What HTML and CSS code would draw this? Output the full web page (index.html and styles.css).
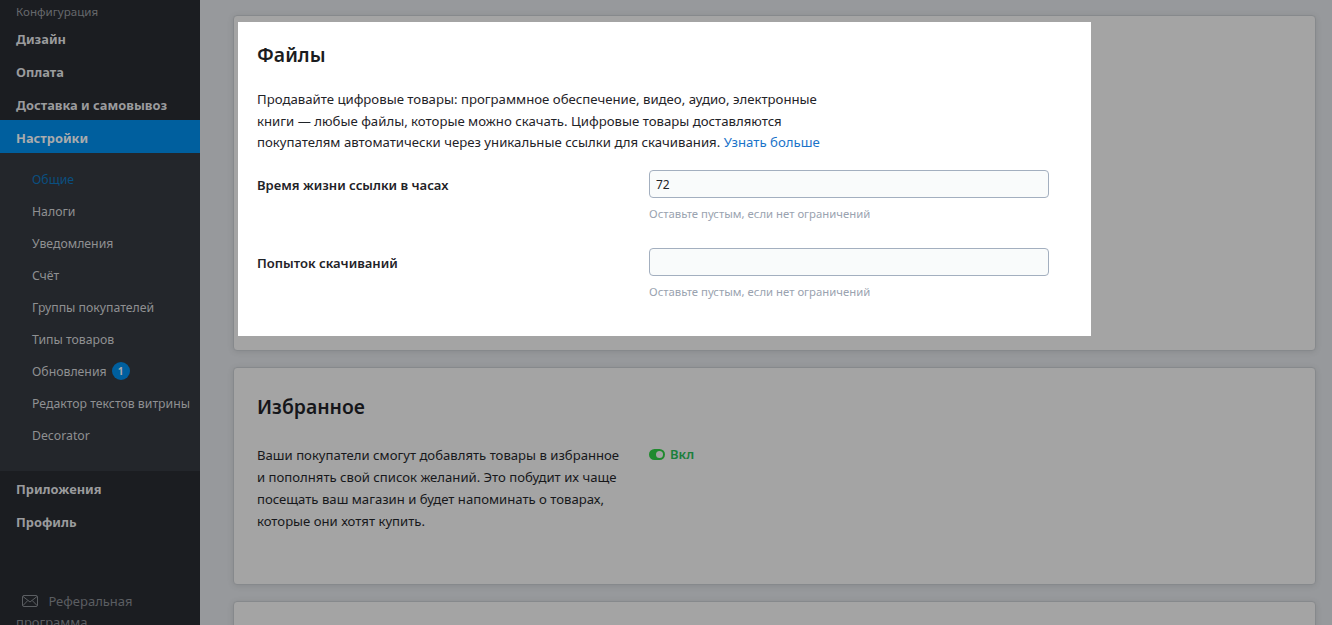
FILE: index.html
```html
<!DOCTYPE html>
<html lang="ru">
<head>
<meta charset="utf-8">
<title>Настройки</title>
<link rel="stylesheet" href="styles.css">
</head>
<body>
<div class="page">
  <aside class="sidebar">
    <div class="side-caption">Конфигурация</div>
    <nav class="top-nav">
      <a class="top-item">Дизайн</a>
      <a class="top-item">Оплата</a>
      <a class="top-item">Доставка и самовывоз</a>
      <a class="top-item active">Настройки</a>
    </nav>
    <nav class="sub-nav">
      <a class="sub-item current">Общие</a>
      <a class="sub-item">Налоги</a>
      <a class="sub-item">Уведомления</a>
      <a class="sub-item">Счёт</a>
      <a class="sub-item">Группы покупателей</a>
      <a class="sub-item">Типы товаров</a>
      <a class="sub-item">Обновления <span class="badge">1</span></a>
      <a class="sub-item">Редактор текстов витрины</a>
      <a class="sub-item">Decorator</a>
    </nav>
    <nav class="top-nav">
      <a class="top-item">Приложения</a>
      <a class="top-item">Профиль</a>
    </nav>
    <a class="referral">
      <svg class="mail" width="16" height="12" viewBox="0 0 16 12" fill="none" stroke="#5b5e62" stroke-width="1"><rect x="0.5" y="0.5" width="15" height="11" rx="1.5"/><path d="M1 1.5l7 5.5 7-5.5M1 10.5l4.8-5M15 10.5l-4.8-5"/></svg>
      Реферальная программа
    </a>
  </aside>
  <main class="content">
    <section class="card card-files">
      <div class="panel">
        <h2 class="panel-title">Файлы</h2>
        <p class="panel-text">Продавайте цифровые товары: программное обеспечение, видео, аудио, электронные книги — любые файлы, которые можно скачать. Цифровые товары доставляются покупателям автоматически через уникальные ссылки для скачивания. <a class="link">Узнать больше</a></p>
        <div class="field">
          <label class="field-label">Время жизни ссылки в часах</label>
          <div class="field-control">
            <input class="input" type="text" value="72">
            <div class="hint">Оставьте пустым, если нет ограничений</div>
          </div>
        </div>
        <div class="field">
          <label class="field-label">Попыток скачиваний</label>
          <div class="field-control">
            <input class="input" type="text">
            <div class="hint">Оставьте пустым, если нет ограничений</div>
          </div>
        </div>
      </div>
    </section>
    <section class="card card-fav">
      <h2 class="card-title">Избранное</h2>
      <div class="fav-row">
        <p class="fav-text">Ваши покупатели смогут добавлять товары в избранное и пополнять свой список желаний. Это побудит их чаще посещать ваш магазин и будет напоминать о товарах, которые они хотят купить.</p>
        <div class="toggle"><span class="switch"></span>Вкл</div>
      </div>
    </section>
    <section class="card card-next"></section>
  </main>
</div>
</body>
</html>
```
FILE: styles.css
```css
* { box-sizing: border-box; }
html, body { margin: 0; height: 625px; overflow: hidden; }
body { font-family: "Noto Sans", "Open Sans", sans-serif; font-size: 13px; color: #1b1c20; background: #97999c; }
.page { display: flex; height: 625px; overflow: hidden; }

.sidebar { width: 200px; flex: none; height: 625px; background: #1b1d21; overflow: hidden; display: flex; flex-direction: column; }
.side-caption { font-size: 11.6px; line-height: 16px; color: #66686c; padding: 4px 16px 1px; }
.top-nav { display: flex; flex-direction: column; }
.top-item { display: block; height: 33px; padding: 3px 0 0 16px; line-height: 30px; font-size: 12.85px; font-weight: 700; color: #9a9b9d; }
.top-item.active { background: #005f9e; color: #a9abad; }
.sub-nav { background: #23262b; padding: 10px 0 20px; display: flex; flex-direction: column; }
.sub-item { display: flex; align-items: center; gap: 5px; height: 32px; padding-left: 32px; font-size: 12.27px; color: #8f9092; white-space: nowrap; }
.sub-item.current { color: #0a4f80; }
.badge { width: 18px; height: 18px; border-radius: 50%; background: #005f9e; color: #a9abad; font-size: 10px; font-weight: 700; text-align: center; line-height: 18px; }
.referral { display: block; margin-top: 54px; padding: 0 16px; width: 150px; font-size: 13px; line-height: 21px; color: #5b5e62; }
.mail { margin: 0 7px 0 6px; vertical-align: -1px; }

.content { flex: 1; padding: 15px 16px 0 33px; display: flex; flex-direction: column; gap: 16px; min-width: 0; }
.card { flex: none; background: #a4a4a4; border: 1px solid #86898c; border-radius: 4px; box-shadow: 0 1px 6px rgba(0,0,0,.1); }
.card-files { height: 336px; padding: 6px 0 0 4px; }
.panel { width: 853px; height: 314px; background: #fff; padding: 21px 19px 0; }
.panel-title { margin: 0; font-size: 19.4px; line-height: 24px; font-weight: 600; color: #1b1c20; }
.panel-text { margin: 22px 0 0; width: 580px; font-size: 13.2px; line-height: 21.7px; color: #1f2328; }
.link { color: #1a73c9; }
.field { display: flex; margin-top: 16px; }
.field + .field { margin-top: 26px; }
.field-label { width: 392px; flex: none; font-size: 13.05px; font-weight: 600; line-height: 30px; color: #1f2328; }
.field-control { width: 400px; }
.input { display: block; width: 400px; height: 28px; padding: 0 6px; border: 1px solid #a3afbf; border-radius: 4px; background: #f9fbfb; font: 12px "Noto Sans", sans-serif; color: #1f2328; outline: none; }
.hint { margin-top: 8px; font-size: 11.35px; line-height: 16px; color: #9aa3b0; }

.card-fav { height: 218px; padding: 26px 23px 0; }
.card-title { margin: 0; font-size: 19.4px; line-height: 26px; font-weight: 600; color: #15161a; }
.fav-row { display: flex; margin-top: 24px; }
.fav-text { margin: 0; width: 392px; padding-right: 20px; font-size: 13.14px; line-height: 22px; color: #17181b; }
.toggle { display: flex; align-items: center; gap: 5px; height: 20px; font-size: 13px; font-weight: 600; color: #1b7f3c; }
.switch { width: 16px; height: 11px; border-radius: 6px; background: #1f8a2e; position: relative; }
.switch::after { content: ""; position: absolute; right: 2px; top: 2px; width: 7px; height: 7px; border-radius: 50%; background: #a4a4a4; }
.card-next { height: 60px; }
```
